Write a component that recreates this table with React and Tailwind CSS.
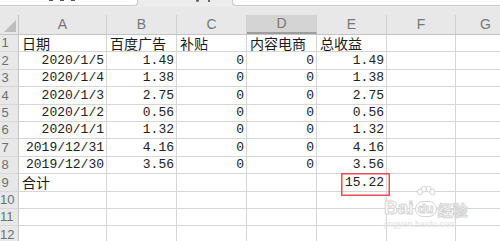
import React from 'react';

// Column widths (px) incl. the 1px right grid line
const COLS = [
  { key: 'A', w: 'w-[88px]' },
  { key: 'B', w: 'w-[70px]' },
  { key: 'C', w: 'w-[70px]' },
  { key: 'D', w: 'w-[70px]' },
  { key: 'E', w: 'w-[70px]' },
  { key: 'F', w: 'w-[69px]' },
  { key: 'G', w: 'w-[60px]' },
];

const ROWS = [
  ['日期', '百度广告', '补贴', '内容电商', '总收益'],
  ['2020/1/5', '1.49', '0', '0', '1.49'],
  ['2020/1/4', '1.38', '0', '0', '1.38'],
  ['2020/1/3', '2.75', '0', '0', '2.75'],
  ['2020/1/2', '0.56', '0', '0', '0.56'],
  ['2020/1/1', '1.32', '0', '0', '1.32'],
  ['2019/12/31', '4.16', '0', '0', '4.16'],
  ['2019/12/30', '3.56', '0', '0', '3.56'],
  ['合计', '', '', '', '15.22'],
  [],
  [],
  [],
];

const CJK = "font-['Noto_Sans_CJK_SC',sans-serif]";
const MONO = "font-['Liberation_Mono',monospace]";

function Cell({ col, value, rowIdx }) {
  const isText = rowIdx === 0 || (rowIdx === 8 && col.key === 'A');
  return (
    <div
      className={`${col.w} shrink-0 h-full border-r border-b border-[#d6d6d6] flex items-center overflow-visible whitespace-nowrap ${
        isText ? `justify-start pl-[3px] ${CJK} text-[14px] text-[#1a1a1a]` : `justify-end pr-[2px] ${MONO} text-[13px] text-[#222]`
      }`}
    >
      {value}
    </div>
  );
}

export default function App() {
  return (
    <div className="w-[500px] h-[241px] overflow-hidden bg-white relative">
      {/* formula bar strip (only its bottom edge is in view) */}
      <div className="h-[7px] flex bg-[#ececec]">
        <div className="w-[138px] h-[6px] bg-white border-b border-r border-[#c8c8c8] rounded-br-[4px] flex items-start gap-[7px] pl-[49px]">
          <div className="w-[4px] h-[1px] bg-[#555]" />
          <div className="w-[4px] h-[1px] bg-[#555]" />
          <div className="w-[4px] h-[1px] bg-[#555]" />
        </div>
        <div className="w-[94px] flex items-start gap-[9px] pl-[58px]">
          <div className="w-[3px] h-[2px] bg-[#666] rounded-b-full" />
          <div className="w-[2px] h-[2px] bg-[#666]" />
        </div>
        <div className="flex-1 h-[6px] bg-white border-b border-l border-[#c8c8c8] rounded-bl-[4px]" />
      </div>
      <div className="h-[8px] bg-[#e8e8e8]" />

      {/* column headers */}
      <div className="h-[20px] flex bg-[#e8e8e8] border-b border-[#c4c4c4] font-['Liberation_Sans',sans-serif] text-[14px] text-[#777]">
        <div className="w-[19px] shrink-0 border-r border-[#c4c4c4] flex items-end justify-end pr-[2px] pb-[2px]">
          <svg width="12" height="12" viewBox="0 0 12 12">
            <polygon points="12,0 12,12 0,12" fill="#bdbdbd" />
          </svg>
        </div>
        {COLS.map((c) => (
          <div
            key={c.key}
            className={`${c.w} shrink-0 border-r border-[#d0d0d0] flex items-center justify-center ${
              c.key === 'D' ? 'bg-[#d4d4d4] border-b-2 border-b-[#9e9e9e]' : ''
            }`}
          >
            {c.key}
          </div>
        ))}
      </div>

      {/* rows */}
      {ROWS.map((r, i) => (
        <div key={i} className="h-[17.4px] flex">
          <div className="w-[19px] shrink-0 h-full bg-[#e8e8e8] border-r border-[#c4c4c4] border-b border-b-[#d8d8d8] flex items-center font-['Liberation_Sans',sans-serif] text-[13px] text-[#6f6f6f]">
            <span className="w-[10px] text-center">{i + 1}</span>
          </div>
          {COLS.map((c, j) => (
            <Cell key={c.key} col={c} value={r[j] || ''} rowIdx={i} />
          ))}
        </div>
      ))}

      {/* red annotation box around total */}
      <svg className="absolute left-[341px] top-[173px]" width="49" height="23" viewBox="0 0 49 23">
        <rect x="0.75" y="0.75" width="47.5" height="21.5" fill="none" stroke="#ee4a58" strokeWidth="1.5" />
      </svg>

      {/* baidu watermark */}
      <div className="absolute left-[384px] top-[186px] w-[90px] pointer-events-none">
        <div className="flex items-end h-[31px]">
          <span className="text-[19px] font-bold leading-none text-white [-webkit-text-stroke:1px_#d4d4d4] font-['Liberation_Sans',sans-serif]">Bai</span>
          <div className="relative w-[24px] h-[31px] flex items-end justify-center">
            <svg className="absolute left-[2px] top-0" width="20" height="14" viewBox="0 0 20 14">
              <g fill="white" stroke="#d4d4d4" strokeWidth="1">
                <ellipse cx="4" cy="6" rx="2.5" ry="3" />
                <ellipse cx="8" cy="3" rx="2.5" ry="3" />
                <ellipse cx="12.5" cy="3" rx="2.5" ry="3" />
                <ellipse cx="16.5" cy="6" rx="2.5" ry="3" />
              </g>
            </svg>
            <span className="text-[13px] font-bold leading-none text-white [-webkit-text-stroke:1px_#d4d4d4] font-['Liberation_Sans',sans-serif] border border-[#d4d4d4] rounded-full px-[2px] pb-[1px] bg-white">du</span>
          </div>
          <span className={`text-[15px] font-bold leading-none text-white [-webkit-text-stroke:1px_#d4d4d4] ${CJK}`}>经验</span>
        </div>
        <div className="text-[9px] leading-none mt-[3px] text-[#e2e2e2] font-['Liberation_Sans',sans-serif]">jingyan.baidu.com</div>
      </div>
    </div>
  );
}
